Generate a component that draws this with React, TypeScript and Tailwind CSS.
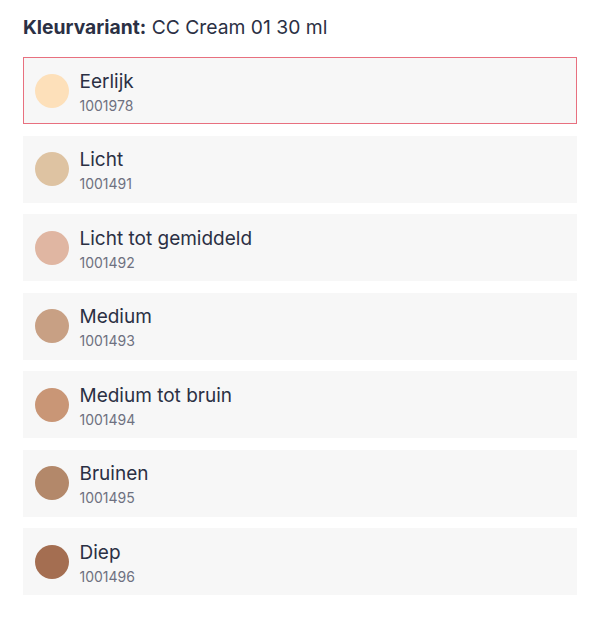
import React from 'react';

const variants = [
  { name: 'Eerlijk', code: '1001978', color: '#fde0ba' },
  { name: 'Licht', code: '1001491', color: '#dec3a2' },
  { name: 'Licht tot gemiddeld', code: '1001492', color: '#e0b6a2' },
  { name: 'Medium', code: '1001493', color: '#c8a084' },
  { name: 'Medium tot bruin', code: '1001494', color: '#c99676' },
  { name: 'Bruinen', code: '1001495', color: '#b3886a' },
  { name: 'Diep', code: '1001496', color: '#a46e51' },
];

export default function App() {
  const selected = 0;

  return (
    <div className="min-h-[619px] w-[600px] bg-white px-[23px] pt-[15px] font-['Inter',sans-serif] text-[#2b3044]">
      <h2 className="text-[19.3px] leading-[24px]">
        <span className="font-bold">Kleurvariant:</span> CC Cream 01 30 ml
      </h2>

      <ul className="mt-[18px] flex flex-col gap-[11.5px]">
        {variants.map((v, i) => (
          <li
            key={v.code}
            className={
              i === selected
                ? 'flex h-[67px] items-center gap-[11px] border-[1.5px] border-[#e8707f] bg-[#f7f7f7] pl-[10.5px]'
                : 'flex h-[67px] items-center gap-[11px] border-[1.5px] border-transparent bg-[#f7f7f7] pl-[10.5px]'
            }
          >
            <span className="h-[34px] w-[34px] shrink-0 rounded-full" style={{ backgroundColor: v.color }} />
            <div className="flex flex-col pt-[4px]">
              <span className="text-[19px] leading-[24px]">{v.name}</span>
              <span className="mt-[2px] text-[14px] leading-[20px] text-[#6e7180]">{v.code}</span>
            </div>
          </li>
        ))}
      </ul>
    </div>
  );
}
